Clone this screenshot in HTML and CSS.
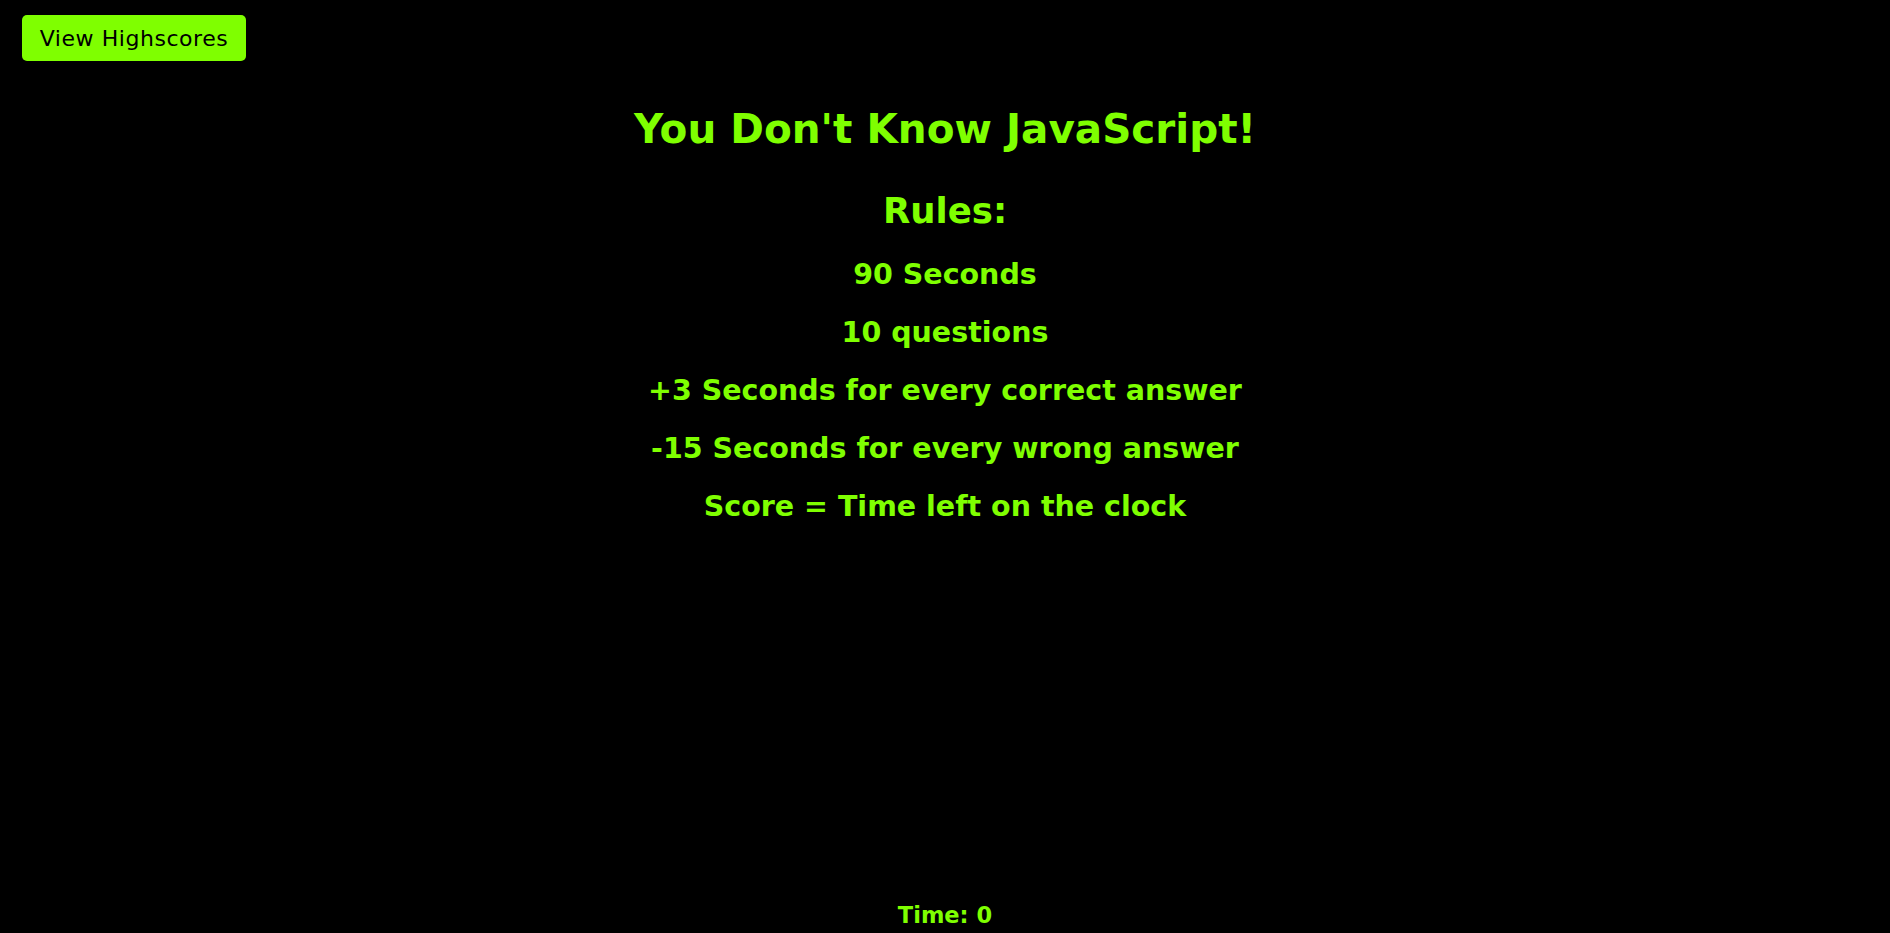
FILE: index.html
```html
<!DOCTYPE html>
<html lang="en">
<head>
<meta charset="utf-8">
<title>You Don't Know JavaScript!</title>
<link rel="stylesheet" href="styles.css">
</head>
<body>
  <header class="top">
    <button class="hs-btn" type="button">View Highscores</button>
  </header>
  <main class="intro">
    <h1 class="title">You Don't Know JavaScript!</h1>
    <h2 class="rules-head">Rules:</h2>
    <ul class="rules">
      <li>90 Seconds</li>
      <li>10 questions</li>
      <li>+3 Seconds for every correct answer</li>
      <li>-15 Seconds for every wrong answer</li>
      <li>Score = Time left on the clock</li>
    </ul>
  </main>
  <footer class="timer">Time: 0</footer>
</body>
</html>
```
FILE: styles.css
```css
html, body {
  margin: 0;
  padding: 0;
}
body {
  background: #000;
  color: #7fff00;
  font-family: "DejaVu Sans", "Liberation Sans", sans-serif;
  min-height: 100vh;
  display: flex;
  flex-direction: column;
}
.top {
  padding: 15px 0 0 22px;
  display: flex;
}
.hs-btn {
  background: #7fff00;
  color: #000;
  border: none;
  border-radius: 5px;
  height: 46px;
  width: 224px;
  padding: 0;
  font-family: "DejaVu Sans", sans-serif;
  font-size: 22px;
  letter-spacing: 0.55px;
  cursor: pointer;
}
.intro {
  flex: 1;
  display: flex;
  flex-direction: column;
  align-items: center;
}
.title {
  margin: 44px 0 0;
  font-size: 40.5px;
  line-height: 48px;
  font-weight: bold;
}
.rules-head {
  margin: 38px 0 0;
  font-size: 35.5px;
  line-height: 40px;
  font-weight: bold;
}
.rules {
  list-style: none;
  margin: 14.5px 0 0;
  padding: 0;
  display: flex;
  flex-direction: column;
  align-items: center;
}
.rules li {
  font-size: 28.5px;
  line-height: 58px;
  font-weight: bold;
}
.timer {
  text-align: center;
  font-size: 22.5px;
  line-height: 24px;
  font-weight: bold;
  padding-bottom: 6px;
}
```
